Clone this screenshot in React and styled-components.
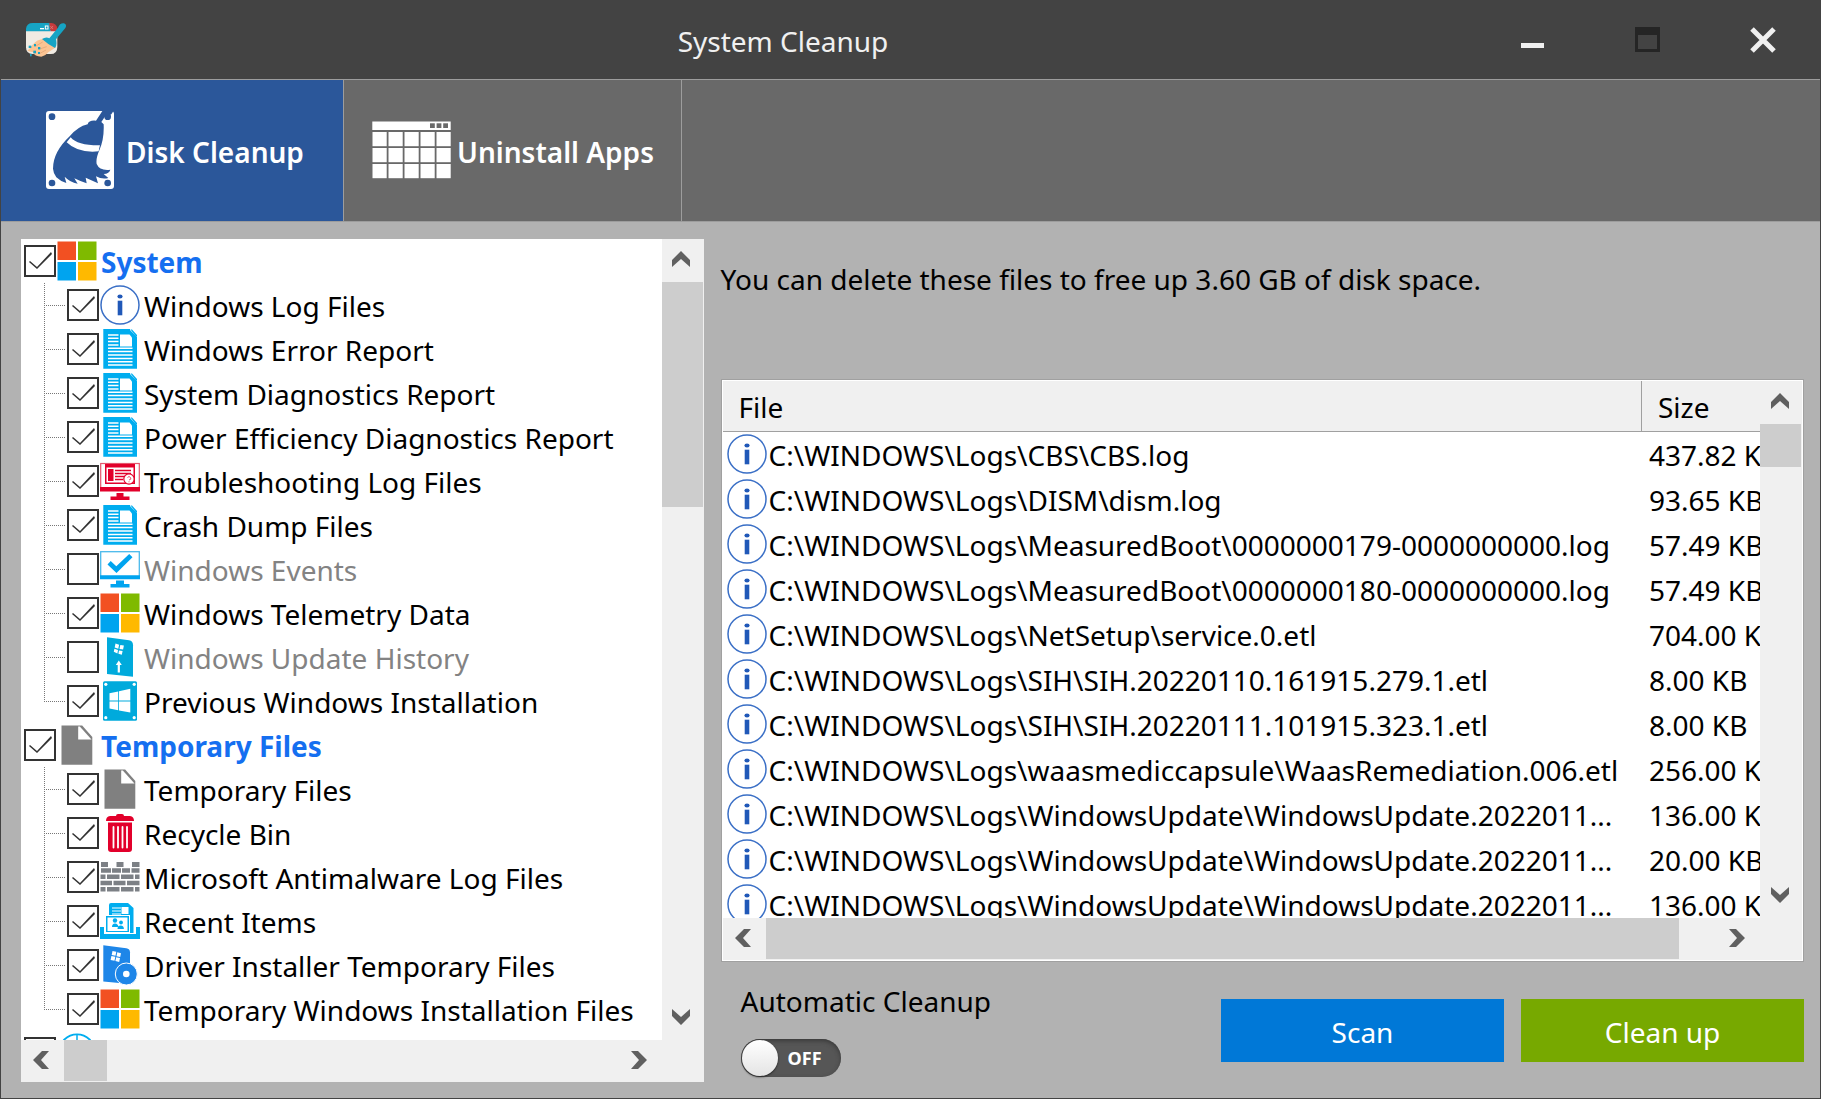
import React from 'react';
import styled, { createGlobalStyle } from 'styled-components';

const GlobalStyle = createGlobalStyle`
  * {
    box-sizing: border-box;
  }

  body {
    margin: 0;
    background: #b2b2b2;
    color: #000;
    font-family: 'Noto Sans', 'Open Sans', sans-serif;
    font-size: 28px;
    line-height: 36px;
  }

  button,
  input {
    font: inherit;
    margin: 0;
  }

  svg {
    display: block;
    flex: none;
  }
`;

const Window = styled.div`
  display: flex;
  flex-direction: column;
  height: 100vh;
  min-width: 1200px;
  border: 1px solid #434343;
  border-top: 0;
`;

const TitleBar = styled.header`
  display: flex;
  align-items: center;
  height: 80px;
  flex: none;
  background: #434343;
  border-bottom: 1px solid #9d9d9d;
`;

const Brand = styled.div`
  width: 90px;
  padding-left: 24px;
`;

const WindowTitle = styled.h1`
  flex: 1;
  margin: 0;
  padding-top: 2px;
  text-align: center;
  font-size: 28px;
  font-weight: 400;
  color: #f0f0f0;
`;

const CaptionButton = styled.button`
  display: flex;
  align-items: center;
  justify-content: center;
  width: 115px;
  height: 79px;
  padding: 0;
  border: 0;
  background: transparent;
`;

const Tabs = styled.nav`
  display: flex;
  flex: none;
  height: 142px;
  background: #696969;
  border-bottom: 1px solid #9d9d9d;
`;

const Tab = styled.button`
  display: flex;
  align-items: center;
  justify-content: center;
  gap: 6px;
  width: ${({ $wide }) => ($wide ? 343 : 338)}px;
  padding: 0;
  border: 0;
  border-right: 1px solid #9d9d9d;
  background: ${({ $active }) => ($active ? '#2b579a' : 'transparent')};
  color: #fff;
  font-weight: 600;
  white-space: nowrap;
`;

const TabIcon = styled.span`
  display: flex;
  align-items: center;
  justify-content: center;
  width: 80px;
  height: 80px;
  padding-bottom: 2px;
`;

const TabLabel = styled.span`
  padding-top: 2px;
`;

const Content = styled.main`
  display: grid;
  grid-template-columns: minmax(0, 63fr) minmax(0, 100fr);
  gap: 17px;
  flex: 1;
  min-height: 0;
  padding: 17px 16px 16px 20px;
`;

const ScrollBox = styled.div`
  display: grid;
  grid-template-columns: minmax(0, 1fr) 42px;
  grid-template-rows: minmax(0, 1fr) 42px;
  min-height: 0;
  background: #fff;
`;

const FileBox = styled(ScrollBox)`
  flex: 1;
  padding: 1px;
  border: 1px solid #a0a0a0;
`;

const Viewport = styled.div`
  overflow: hidden;
`;

const Bar = styled.div`
  display: flex;
  flex-direction: ${({ $vertical }) => ($vertical ? 'column' : 'row')};
  background: #f0f0f0;
`;

const BarButton = styled.button`
  display: flex;
  align-items: center;
  justify-content: center;
  flex: 0 0 43px;
  padding: 0 3px 3px 0;
  border: 0;
  background: #f0f0f0;
`;

const BarTrack = styled.div`
  display: flex;
  flex: 1;
  min-width: 0;
  min-height: 0;
  flex-direction: inherit;
  padding: ${({ $vertical }) => ($vertical ? '0 1px 0 0' : '0 0 1px 0')};
`;

const BarThumb = styled.div`
  flex: 0 0 ${({ $size }) => $size};
  background: #cdcdcd;
`;

const Corner = styled.div`
  background: #f0f0f0;
`;

const TreeList = styled.ul`
  margin: 0;
  padding: 0;
  list-style: none;
`;

const TreeItem = styled.li`
  padding-left: ${({ $child }) => ($child ? 0 : 3)}px;
`;

const TreeRow = styled.label`
  display: flex;
  align-items: center;
  gap: 1px;
  height: 44px;
  white-space: nowrap;
`;

const Branch = styled.span`
  width: 22px;
  height: 44px;
  margin-left: 20px;
  background-image: repeating-linear-gradient(to bottom, #777 0 1px, transparent 1px 2px),
    repeating-linear-gradient(to right, #777 0 1px, transparent 1px 2px);
  background-size: 1px ${({ $last }) => ($last ? '22px' : '44px')}, 22px 1px;
  background-position: 0 0, 0 22px;
  background-repeat: no-repeat;
`;

const Check = styled.input`
  appearance: none;
  flex: none;
  width: 32px;
  height: 32px;
  border: 2px solid #333;
  background: #fff;

  &:checked::before {
    content: '';
    display: block;
    width: 28px;
    height: 28px;
    background: #333;
    clip-path: polygon(3px 15px, 4px 14px, 11px 20px, 25px 5px, 26px 7px, 11px 22px);
  }
`;

const TreeText = styled.span`
  padding: 1px 0 0 3px;
  font-weight: ${({ $group }) => ($group ? 700 : 400)};
  color: ${({ $group, $muted }) => ($group ? '#156ff0' : $muted ? '#838383' : '#000')};
`;

const Side = styled.section`
  display: flex;
  flex-direction: column;
  min-height: 0;
`;

const Summary = styled.p`
  flex: none;
  height: 140px;
  margin: 0;
  padding-top: 22px;
  white-space: nowrap;
`;

const FileTable = styled.table`
  width: 100%;
  table-layout: fixed;
  border-collapse: separate;
  border-spacing: 0;
`;

const HeadCell = styled.th`
  width: ${({ $narrow }) => ($narrow ? '118px' : 'auto')};
  height: 51px;
  padding: 2px 0 0 16px;
  background: #f0f0f0;
  border-right: ${({ $narrow }) => ($narrow ? 0 : '1px solid #a0a0a0')};
  border-bottom: 1px solid #a0a0a0;
  text-align: left;
  font-weight: 400;
`;

const Cell = styled.td`
  height: 45px;
  padding: ${({ $size }) => ($size ? '5px 0 0 7px' : '2px 0 0 4px')};
  overflow: hidden;
  vertical-align: top;
  white-space: nowrap;
`;

const FileName = styled.span`
  display: flex;
  gap: 2px;
`;

const FilePath = styled.span`
  padding-top: 3px;
`;

const Footer = styled.footer`
  display: flex;
  justify-content: space-between;
  flex: none;
  height: 120px;
  padding: 21px 0 4px 20px;
`;

const AutoCleanup = styled.div`
  display: flex;
  flex-direction: column;
  gap: 20px;
`;

const Switch = styled.button`
  display: flex;
  align-items: center;
  gap: 10px;
  width: 100px;
  height: 38px;
  padding: 0 1px;
  border: 0;
  border-radius: 19px;
  background: #565656;
  box-shadow: inset 0 2px 4px #3a3a3a;
  color: #fff;
  font-size: 18px;
  font-weight: 700;
`;

const Knob = styled.span`
  width: 36px;
  height: 36px;
  border-radius: 50%;
  background: linear-gradient(#fff, #e4e4e4);
  box-shadow: 0 1px 2px #222;
`;

const Actions = styled.div`
  display: flex;
  gap: 17px;
  padding-top: 16px;
`;

const ActionButton = styled.button`
  width: 283px;
  height: 63px;
  padding: 3px 0 0;
  border: 0;
  background: ${({ $primary }) => ($primary ? '#0078d7' : '#77a900')};
  color: #fff;
`;

const Icon = (props) => <svg width="40" height="40" viewBox="0 0 40 40" aria-hidden="true" {...props} />;

const InfoIcon = () => (
  <Icon>
    <circle cx="20" cy="20" r="19" fill="#fff" stroke="#3a6fc6" strokeWidth="1.5" />
    <ellipse cx="20" cy="11.5" rx="2.6" ry="2" fill="#2058b8" />
    <rect x="17.7" y="15.7" width="4.6" height="14.6" fill="#2058b8" />
  </Icon>
);

const WindowsIcon = () => (
  <Icon>
    <rect x="0.5" y="0.5" width="18.5" height="18.5" fill="#f25022" />
    <rect x="21" y="0.5" width="18.5" height="18.5" fill="#7fba00" />
    <rect x="0.5" y="21" width="18.5" height="18.5" fill="#00a4ef" />
    <rect x="21" y="21" width="18.5" height="18.5" fill="#ffb900" />
  </Icon>
);

const ReportIcon = () => (
  <Icon>
    <path d="M3.3 0H30v1l7 7v31.7H3.3z" fill="#00adef" />
    <path d="M32 0l5 6V0z" fill="#fff" />
    <path d="M30.5 0.5h1.5l5 5.5v1.5h-1z" fill="#00adef" />
    <path
      d="M8 6h10.5M8 9.3h10.5M8 12.6h10.5M8 15.9h10.5M8 19.2h24.5M8 22.6h24.5M8 26h24.5M8 29.4h24.5M8 32.8h24.5M8 36h24.5"
      stroke="#fff"
      strokeWidth="1.5"
    />
    <path d="M20 5.5h9.5l2.5 3v9H20z" fill="#fff" />
  </Icon>
);

const TroubleshootIcon = () => (
  <Icon>
    <rect x="0.7" y="2.5" width="38.6" height="25" fill="#fff" stroke="#e4566c" strokeWidth="1.2" />
    <path d="M0 26h40v4.5H0zM16.5 32h7v3.5h6V39h-19v-3.5h6z" fill="#e2002b" />
    <path d="M5 3h30v20H5z" fill="#e2002b" />
    <path d="M6.5 6.5h27v15h-27z" fill="#fff" />
    <path d="M8 8h5.5v12H8z" fill="#e2002b" />
    <path d="M15 9.5h16M15 12.5h16M15 15.5h10M15 18.5h8" stroke="#e2002b" strokeWidth="1.3" />
    <circle cx="29" cy="18" r="5.2" fill="#fff" stroke="#e2002b" strokeWidth="1.2" />
    <path d="M27.5 16.5q1.5-2 3 0t-1.5 2.5M29 20.3v1" fill="none" stroke="#e4566c" strokeWidth="1" />
  </Icon>
);

const EventsIcon = () => (
  <Icon>
    <rect x="0.7" y="2.7" width="38.6" height="25" fill="#fff" stroke="#4ab9ec" strokeWidth="1.3" />
    <path d="M0 26.3h40v4H0zM16 31.5h8v3.5h5.5v3.5h-19V35H16z" fill="#00a4ef" />
    <path d="M7.5 15.5l3.2-3.5 5.6 5.2L29.2 5l3.3 3.2L16.5 24z" fill="#00a4ef" />
  </Icon>
);

const UpdateIcon = () => (
  <Icon>
    <path d="M7 .3l22 3q4 .7 4 5v31.4L7 37z" fill="#00aadc" />
    <path d="M15.5 6.5l3.6 1.2-.8 4-3.6-1.2zM20.3 8l3.6.5-.8 4-3.6-.5zM14.4 11.8l3.6 1.2-.6 3.4-3.6-1.6zM19 13.4l3.6.5-.8 3.8-3.4-.9z" fill="#fff" />
    <path d="M18.8 23.5l3 4.5h-1.9v7.5h-2.2V28h-1.9z" fill="#fff" />
  </Icon>
);

const PreviousIcon = () => (
  <Icon>
    <rect x="3" y="0.3" width="34" height="39.4" rx="1.5" fill="#00aadc" />
    <circle cx="5.8" cy="3.3" r="1.6" fill="#fff" />
    <circle cx="34.2" cy="3.3" r="1.6" fill="#fff" />
    <circle cx="5.8" cy="36.7" r="1.6" fill="#fff" />
    <circle cx="34.2" cy="36.7" r="1.6" fill="#fff" />
    <path d="M9.5 12.2l8.7-1.7v9H9.5zM19 10.2l11.3-2.4v11.7H19zM9.5 20.5h8.7v8.8l-8.7-1.8zM19 20.5h11.3v11L19 29.4z" fill="#fff" />
  </Icon>
);

const PageIcon = () => (
  <Icon>
    <path d="M4.5.5h20.7L35.3 12v27.7H4.5z" fill="#808080" />
    <path d="M21.2 1.5h1.6L34.5 14.5H21.2z" fill="#fff" />
  </Icon>
);

const BinIcon = () => (
  <Icon>
    <path d="M16 3q0-2 2-2h4q2 0 2 2h6q4 .5 4 5H6q0-4.5 4-5z" fill="#e2002b" />
    <path d="M8 9.5h24V36q0 3-3 3H11q-3 0-3-3z" fill="#e2002b" />
    <path d="M13.5 14v20.5M18 14v20.5M22.5 14v20.5M27 14v20.5" stroke="#fff" strokeWidth="1.8" strokeLinecap="round" />
  </Icon>
);

const WallIcon = () => (
  <Icon>
    <path
      d="M1 5h7v5H1zM16.5 5h7v5h-7zM32 5h7.5v5H32zM1 11.3h10v4.5H1zM12 11.3h9v4.5h-9zM22 11.3h8v4.5h-8zM31.5 11.3h8v4.5h-8zM.5 17.5h5V22h-5zM7 17.5h12.5V22H7zM21 17.5h12.5V22H21zM35 17.5h4.5V22H35zM.5 23.7H12v4.5H.5zM13.5 23.7h12v4.5h-12zM27 23.7h12.5v4.5H27zM.5 30h5v4.5h-5zM7 30h12.5v4.5H7zM21 30h12.5v4.5H21zM35 30h4.5v4.5H35z"
      fill="#7c8085"
    />
  </Icon>
);

const RecentIcon = () => (
  <Icon>
    <path d="M9 15V4q0-2 2-2h17l5.5 5v25H28V15z" fill="#00adef" />
    <path d="M12 7h9M12 10h9M12 13h9" stroke="#fff" strokeWidth="1.2" />
    <path d="M21.5 6h7v7h-7z" fill="#fff" />
    <path d="M0 26h4v7h32v-7h4v12H0z" fill="#00adef" />
    <rect x="5.5" y="14.5" width="24" height="17" fill="#00adef" stroke="#fff" />
    <rect x="7.5" y="16.5" width="20" height="13.5" fill="#fff" />
    <circle cx="15" cy="19.5" r="2.2" fill="#00adef" />
    <circle cx="21" cy="21.5" r="1.9" fill="#00adef" />
    <path d="M12 26q0-3.5 3-3.5t3.5 3.5zM17.5 28q0-3.5 3.2-3.5t3.2 3.5z" fill="#00adef" />
  </Icon>
);

const DriverIcon = () => (
  <Icon>
    <path d="M3.3.3l23 3q3.7.7 3.7 4V39L3.3 36.5z" fill="#1e86e8" />
    <path d="M12.5 6l3.8.8-.8 4-3.8-.8zM17.3 7.2l3.7 1-.8 3.9-3.7-.8zM11.4 11l3.9.8-.8 3.9-3.9-.8zM16.2 12.2l3.8.9-.8 3.9-3.8-.9z" fill="#fff" />
    <circle cx="26.3" cy="29" r="11" fill="#1e86e8" stroke="#fff" strokeWidth="1" />
    <circle cx="26.3" cy="29" r="3.3" fill="#fff" />
  </Icon>
);

const ClockIcon = () => (
  <Icon>
    <circle cx="20" cy="19" r="17.7" fill="#fff" stroke="#00adef" strokeWidth="1.8" />
    <path d="M20 2v5M20 19V10M20 19h7" stroke="#00adef" strokeWidth="1.5" />
  </Icon>
);

const AppIcon = () => (
  <svg width="42" height="35" viewBox="27 26 126 105" aria-hidden="true">
    <path d="M30 50h94v50q0 22-20 22H50q-20 0-20-20z" fill="#f0ebe3" />
    <path d="M30 54V46q2-17 20-17h54v25z" fill="#16a4c4" />
    <path d="M100 29h6q16 2 18 16v9h-20q-4-12-4-25z" fill="#c63a3c" />
    <path d="M72 46h12" stroke="#fff" strokeWidth="4" />
    <rect x="88" y="38" width="8" height="9" fill="none" stroke="#fff" strokeWidth="3" />
    <path d="M103 38l8 9M111 38l-8 9" stroke="#dc8b86" strokeWidth="2" />
    <path d="M84 76q-22 2-34 18-8 10-16 18 10 4 16 4 6 14 26 14 12-2 22-14l22-14z" fill="#fbc493" />
    <path d="M60 98l20-12M68 108l24-8M72 120l18-10" stroke="#e0a070" strokeWidth="2" />
    <path d="M78 77q12-8 22-2l26-32q6-15 18-13 10 4 4 14l-28 34q4 18-3 26-20-10-39-27z" fill="#16a4c4" />
    <g fill="#16a4c4">
      <rect x="38" y="97" width="8" height="7" />
      <rect x="54" y="92" width="6" height="7" />
      <rect x="66" y="101" width="7" height="7" />
      <rect x="52" y="112" width="8" height="8" />
      <rect x="66" y="116" width="6" height="6" />
      <rect x="42" y="122" width="5" height="7" />
    </g>
  </svg>
);

const BroomIcon = () => (
  <svg width="68" height="78" viewBox="27 33 204 234" aria-hidden="true">
    <rect x="27" y="33" width="204" height="234" rx="9" fill="#fff" />
    <g fill="#2b579a">
      <circle cx="45" cy="50" r="10" />
      <circle cx="212" cy="50" r="10" />
      <circle cx="45" cy="249" r="10" />
      <circle cx="212" cy="249" r="10" />
      <path d="M196 33L177 62Q155 60 152 73Q122 80 98 109Q48 156 48 206Q49 220 58 232Q70 244 88 249L83 230Q99 247 122 251L112 235Q130 244 149 250L146 233L183 250L177 229Q195 239 214 234L200 222Q217 221 220 209Q188 213 179 192Q176 176 187 151Q202 116 200 73L193 66L207 45Q215 47 223 43L229 34L219 30z" />
    </g>
    <path d="M101 112Q122 137 189 136Q186 146 185 154Q122 160 89 127z" fill="#fff" />
  </svg>
);

const AppsGridIcon = () => (
  <svg width="79" height="58" viewBox="0 0 79 58" fill="#fff" aria-hidden="true">
    <rect x="0.3" y="0.5" width="78.4" height="8.5" />
    {[58, 64.6, 71.2].map((x) => (
      <rect key={x} x={x} y="2.3" width="4.8" height="4.7" fill="#696969" />
    ))}
    {[11, 27, 43].map((y) =>
      [0.5, 16.5, 32.5, 48.5, 64.5].map((x) => (
        <rect key={`${x}-${y}`} x={x} y={y} width="14.2" height="14.2" />
      ))
    )}
  </svg>
);

const ANGLES = { up: 0, right: 90, down: 180, left: 270 };

const Arrow = ({ dir }) => (
  <svg width="18" height="18" viewBox="0 0 18 18" aria-hidden="true">
    <path d="M0 10L9 1l9 9v7L9 9l-9 8z" fill="#606060" transform={`rotate(${ANGLES[dir]} 9 9)`} />
  </svg>
);

const ScrollBar = ({ vertical, size }) => (
  <Bar $vertical={vertical}>
    <BarButton type="button" aria-label={vertical ? 'Scroll up' : 'Scroll left'}>
      <Arrow dir={vertical ? 'up' : 'left'} />
    </BarButton>
    <BarTrack $vertical={vertical}>
      <BarThumb $size={size} />
    </BarTrack>
    <BarButton type="button" aria-label={vertical ? 'Scroll down' : 'Scroll right'}>
      <Arrow dir={vertical ? 'down' : 'right'} />
    </BarButton>
  </Bar>
);

const GROUPS = [
  {
    name: 'System',
    icon: WindowsIcon,
    on: true,
    items: [
      { name: 'Windows Log Files', icon: InfoIcon, on: true },
      { name: 'Windows Error Report', icon: ReportIcon, on: true },
      { name: 'System Diagnostics Report', icon: ReportIcon, on: true },
      { name: 'Power Efficiency Diagnostics Report', icon: ReportIcon, on: true },
      { name: 'Troubleshooting Log Files', icon: TroubleshootIcon, on: true },
      { name: 'Crash Dump Files', icon: ReportIcon, on: true },
      { name: 'Windows Events', icon: EventsIcon, on: false },
      { name: 'Windows Telemetry Data', icon: WindowsIcon, on: true },
      { name: 'Windows Update History', icon: UpdateIcon, on: false },
      { name: 'Previous Windows Installation', icon: PreviousIcon, on: true },
    ],
  },
  {
    name: 'Temporary Files',
    icon: PageIcon,
    on: true,
    items: [
      { name: 'Temporary Files', icon: PageIcon, on: true },
      { name: 'Recycle Bin', icon: BinIcon, on: true },
      { name: 'Microsoft Antimalware Log Files', icon: WallIcon, on: true },
      { name: 'Recent Items', icon: RecentIcon, on: true },
      { name: 'Driver Installer Temporary Files', icon: DriverIcon, on: true },
      { name: 'Temporary Windows Installation Files', icon: WindowsIcon, on: true },
    ],
  },
  { name: '', icon: ClockIcon, on: false, items: [] },
];

const FILES = [
  ['C:\\WINDOWS\\Logs\\CBS\\CBS.log', '437.82 KB'],
  ['C:\\WINDOWS\\Logs\\DISM\\dism.log', '93.65 KB'],
  ['C:\\WINDOWS\\Logs\\MeasuredBoot\\0000000179-0000000000.log', '57.49 KB'],
  ['C:\\WINDOWS\\Logs\\MeasuredBoot\\0000000180-0000000000.log', '57.49 KB'],
  ['C:\\WINDOWS\\Logs\\NetSetup\\service.0.etl', '704.00 KB'],
  ['C:\\WINDOWS\\Logs\\SIH\\SIH.20220110.161915.279.1.etl', '8.00 KB'],
  ['C:\\WINDOWS\\Logs\\SIH\\SIH.20220111.101915.323.1.etl', '8.00 KB'],
  ['C:\\WINDOWS\\Logs\\waasmediccapsule\\WaasRemediation.006.etl', '256.00 KB'],
  ['C:\\WINDOWS\\Logs\\WindowsUpdate\\WindowsUpdate.2022011...', '136.00 KB'],
  ['C:\\WINDOWS\\Logs\\WindowsUpdate\\WindowsUpdate.2022011...', '20.00 KB'],
  ['C:\\WINDOWS\\Logs\\WindowsUpdate\\WindowsUpdate.2022011...', '136.00 KB'],
];

const Tree = () => (
  <ScrollBox>
    <Viewport>
      <TreeList>
        {GROUPS.map((group) => (
          <TreeItem key={group.name}>
            <TreeRow>
              <Check type="checkbox" defaultChecked={group.on} aria-label={group.name || 'More items'} />
              <group.icon />
              <TreeText $group>{group.name}</TreeText>
            </TreeRow>
            <TreeList>
              {group.items.map((item, i) => (
                <TreeItem key={item.name} $child>
                  <TreeRow>
                    <Branch $last={i === group.items.length - 1} />
                    <Check type="checkbox" defaultChecked={item.on} />
                    <item.icon />
                    <TreeText $muted={!item.on}>{item.name}</TreeText>
                  </TreeRow>
                </TreeItem>
              ))}
            </TreeList>
          </TreeItem>
        ))}
      </TreeList>
    </Viewport>
    <ScrollBar vertical size="31.5%" />
    <ScrollBar size="43px" />
    <Corner />
  </ScrollBox>
);

const FileList = () => (
  <FileBox>
    <Viewport>
      <FileTable>
        <thead>
          <tr>
            <HeadCell>File</HeadCell>
            <HeadCell $narrow>Size</HeadCell>
          </tr>
        </thead>
        <tbody>
          {FILES.map(([path, size], i) => (
            <tr key={i}>
              <Cell>
                <FileName>
                  <InfoIcon />
                  <FilePath>{path}</FilePath>
                </FileName>
              </Cell>
              <Cell $size>{size}</Cell>
            </tr>
          ))}
        </tbody>
      </FileTable>
    </Viewport>
    <ScrollBar vertical size="43px" />
    <ScrollBar size="96%" />
    <Corner />
  </FileBox>
);

const App = () => {
  return (
    <>
      <GlobalStyle />
      <Window>
        <TitleBar>
          <Brand>
            <AppIcon />
          </Brand>
          <WindowTitle>System Cleanup</WindowTitle>
          <CaptionButton type="button" aria-label="Minimize">
            <svg width="23" height="26" viewBox="0 0 23 26">
              <path d="M0 16h23v5H0z" fill="#f0f0f0" />
            </svg>
          </CaptionButton>
          <CaptionButton type="button" aria-label="Maximize">
            <svg width="25" height="25" viewBox="0 0 25 25">
              <path d="M0 0h25v25H0zM3 8v14h19V8z" fill="#252525" fillRule="evenodd" />
            </svg>
          </CaptionButton>
          <CaptionButton type="button" aria-label="Close">
            <svg width="26" height="26" viewBox="0 0 26 26">
              <path d="M2 2l22 22M24 2L2 24" stroke="#f0f0f0" strokeWidth="5" />
            </svg>
          </CaptionButton>
        </TitleBar>

        <Tabs>
          <Tab type="button" $active $wide>
            <TabIcon>
              <BroomIcon />
            </TabIcon>
            <TabLabel>Disk Cleanup</TabLabel>
          </Tab>
          <Tab type="button">
            <TabIcon>
              <AppsGridIcon />
            </TabIcon>
            <TabLabel>Uninstall Apps</TabLabel>
          </Tab>
        </Tabs>

        <Content>
          <Tree />
          <Side>
            <Summary>You can delete these files to free up 3.60 GB of disk space.</Summary>
            <FileList />
            <Footer>
              <AutoCleanup>
                <span id="auto-cleanup">Automatic Cleanup</span>
                <Switch type="button" role="switch" aria-checked="false" aria-labelledby="auto-cleanup">
                  <Knob />
                  OFF
                </Switch>
              </AutoCleanup>
              <Actions>
                <ActionButton type="button" $primary>
                  Scan
                </ActionButton>
                <ActionButton type="button">Clean up</ActionButton>
              </Actions>
            </Footer>
          </Side>
        </Content>
      </Window>
    </>
  );
};

export default App;
